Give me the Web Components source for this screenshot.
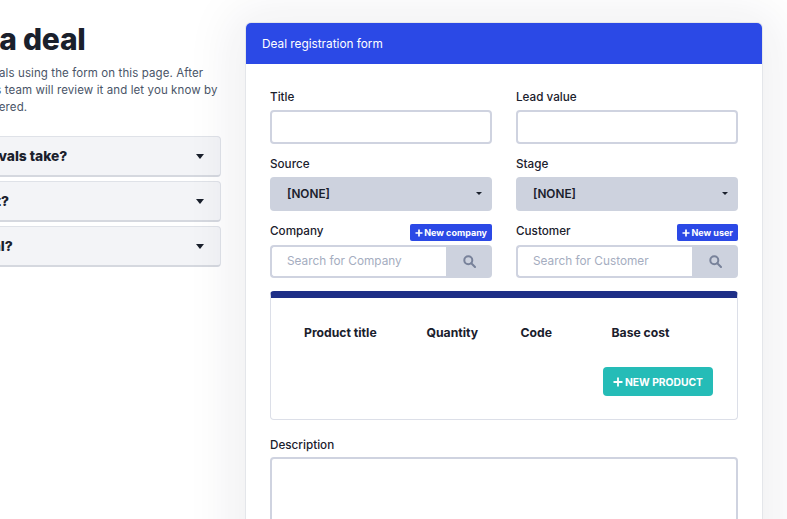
<!DOCTYPE html>
<html>
<head>
<meta charset="utf-8">
<title>Register a deal</title>
<style>
html, body { margin: 0; height: 519px; overflow: hidden; background: #fff; }
body { font-family: Inter, "Liberation Sans", sans-serif; color: #1a202c; }
</style>
</head>
<body>
<template id="faq-item-tpl">
  <style>
    :host { display: flex; align-items: center; justify-content: space-between; height: 38px; padding: 0 16px;
      background: #f3f4f7; border: 1px solid #dfe2e8; border-bottom: 2px solid #d5d8df; border-radius: 4px;
      font-size: 13.8px; font-weight: 800; color: #1a202c; white-space: nowrap; }
    i { width: 0; height: 0; border: 4px solid transparent; border-top: 5px solid #1a202c; border-bottom: 0; }
  </style>
  <slot></slot><i></i>
</template>

<template id="deal-intro-tpl">
  <style>
    :host { display: block; width: 366px; flex: none; margin-top: -2px; }
    h1 { margin: 0 0 8px 16px; font-size: 30px; line-height: 36px; font-weight: 800; color: #1a202c; letter-spacing: -.27px; }
    p { margin: 0 0 20px 27px; font-size: 11.5px; line-height: 17px; color: #4a5568; letter-spacing: .1px; white-space: nowrap; }
    .list { display: flex; flex-direction: column; gap: 4px; }
  </style>
  <h1>Register a deal</h1>
  <p>Register your new deals using the form on this page. After<br>submission, our sales team will review it and let you know by<br>email once it is registered.</p>
  <div class="list"><slot></slot></div>
</template>

<template id="form-field-tpl">
  <style>
    :host { display: block; min-width: 0; }
    .head { display: flex; justify-content: space-between; align-items: flex-end; height: 20px; margin-bottom: 3px; }
    label { font-size: 11.7px; line-height: var(--label-height, 20px); font-weight: 500; color: #1a202c; }
  </style>
  <div class="head"><label></label><slot name="action"></slot></div>
  <slot></slot>
</template>

<template id="text-box-tpl">
  <style>
    :host { display: block; }
    .box { box-sizing: border-box; height: var(--box-height, 34px); background: #fff; border: 2px solid #cfd3e0; border-radius: 4px; }
  </style>
  <div class="box"></div>
</template>

<template id="select-box-tpl">
  <style>
    :host { display: flex; align-items: center; justify-content: space-between; box-sizing: border-box; height: 34px; padding: 0 10px 1px 17px;
      background: #cdd2de; border-radius: 4px; font-size: 11.8px; font-weight: 600; color: #1a202c; }
    i { width: 0; height: 0; border: 3px solid transparent; border-top: 3.5px solid #1a202c; border-bottom: 0; }
  </style>
  <slot></slot><i></i>
</template>

<template id="search-box-tpl">
  <style>
    :host { display: flex; height: 33px; margin-top: 4px; }
    .input { flex: 1; box-sizing: border-box; display: flex; align-items: center; padding: 0 0 1px 15px; border: 2px solid #cfd3e0; border-right: 0;
      border-radius: 4px 0 0 4px; font-size: 11.8px; color: #a5adc0; }
    .btn { flex: none; width: 46px; display: flex; align-items: center; justify-content: center; padding-bottom: 1px; box-sizing: border-box; background: #cdd2de; border-radius: 0 4px 4px 0; }
    svg { display: block; margin-left: 1px; }
  </style>
  <div class="input"></div>
  <div class="btn"><svg width="13" height="13" viewBox="0 0 13 13" fill="none" stroke="#78829a" stroke-width="2"><circle cx="5.3" cy="5.3" r="4"/><path d="M8.3 8.3 12 12" stroke-linecap="round"/></svg></div>
</template>

<template id="small-badge-tpl">
  <style>
    :host { display: inline-flex; align-items: center; gap: 1.5px; height: 17px; padding: 0 5px 0 4.5px; background: #2b49e6; border-radius: 2px;
      color: #fff; font-size: 9px; font-weight: 700; white-space: nowrap; }
    svg { display: block; }
  </style>
  <svg width="8" height="8" viewBox="0 0 8 8"><path d="M4 .5v7M.5 4h7" stroke="#fff" stroke-width="1.7"/></svg><slot></slot>
</template>

<template id="product-table-tpl">
  <style>
    :host { display: block; box-sizing: border-box; height: 129px; margin-top: 13px; border: 1px solid #dcdfe8; border-top: 7px solid #1e2f87; border-radius: 4px; }
    .cols { display: grid; grid-template-columns: 122.5px 94px 91px 1fr; padding: 27px 0 0 33px; font-size: 12.2px; line-height: 16px; font-weight: 700; color: #1a202c; }
    .act { display: flex; justify-content: flex-end; padding: 26px 24px 0 0; }
    .btn { display: flex; align-items: center; gap: 2px; height: 29px; padding: 0 10px; background: #25bcb7; border-radius: 4px; color: #fff; font-size: 10.3px; font-weight: 700; }
    svg { display: block; }
  </style>
  <div class="cols"><span>Product title</span><span>Quantity</span><span>Code</span><span>Base cost</span></div>
  <div class="act"><div class="btn"><svg width="10" height="10" viewBox="0 0 10 10"><path d="M5 .5v9M.5 5h9" stroke="#fff" stroke-width="1.8"/></svg>NEW PRODUCT</div></div>
</template>

<template id="deal-card-tpl">
  <style>
    :host { display: block; width: 516px; flex: none; background: #fff; border-radius: 5px; box-shadow: 0 0 0 1px #e4e6ea, 0 4px 50px 14px rgba(30,35,50,.07); }
    header { height: 41px; display: flex; align-items: center; padding: 0 16px; background: #2b49e6; border-radius: 5px 5px 0 0; color: #fff; font-size: 11.8px; font-weight: 400; }
    .body { padding: 23px 24px 40px; }
    .grid { display: grid; grid-template-columns: 1fr 1fr; column-gap: 24px; row-gap: 10px; }
    .desc { margin-top: 14px; --label-height: 18px; --box-height: 120px; }
  </style>
  <header>Deal registration form</header>
  <div class="body">
    <div class="grid"><slot name="fields"></slot></div>
    <slot name="products"></slot>
    <div class="desc"><slot name="description"></slot></div>
  </div>
</template>

<template id="deal-page-tpl">
  <style>
    :host { display: flex; align-items: flex-start; gap: 25px; margin-left: -145px; padding-top: 23px; }
  </style>
  <slot></slot>
</template>

<deal-page>
  <deal-intro>
    <faq-item>How long do approvals take?</faq-item>
    <faq-item>Who can register it?</faq-item>
    <faq-item>What is a good deal?</faq-item>
  </deal-intro>
  <deal-card>
    <form-field slot="fields" label="Title"><text-box></text-box></form-field>
    <form-field slot="fields" label="Lead value"><text-box></text-box></form-field>
    <form-field slot="fields" label="Source"><select-box>[NONE]</select-box></form-field>
    <form-field slot="fields" label="Stage"><select-box>[NONE]</select-box></form-field>
    <form-field slot="fields" label="Company"><small-badge slot="action">New company</small-badge><search-box placeholder="Search for Company"></search-box></form-field>
    <form-field slot="fields" label="Customer"><small-badge slot="action">New user</small-badge><search-box placeholder="Search for Customer"></search-box></form-field>
    <product-table slot="products"></product-table>
    <form-field slot="description" label="Description"><text-box></text-box></form-field>
  </deal-card>
</deal-page>

<script>
class TemplatedElement extends HTMLElement {
  constructor() {
    super();
    this.attachShadow({ mode: 'open' });
    const tpl = document.getElementById(this.constructor.tpl);
    this.shadowRoot.appendChild(tpl.content.cloneNode(true));
  }
}

const define = (name, extra) => {
  customElements.define(name, class extends TemplatedElement {
    static tpl = name + '-tpl';
    connectedCallback() { if (extra) extra(this); }
  });
};

define('deal-page');
define('deal-intro');
define('faq-item');
define('deal-card');
define('text-box');
define('select-box');
define('small-badge');
define('product-table');
define('form-field', el => { el.shadowRoot.querySelector('label').textContent = el.getAttribute('label'); });
define('search-box', el => { el.shadowRoot.querySelector('.input').textContent = el.getAttribute('placeholder'); });
</script>
</body>
</html>
